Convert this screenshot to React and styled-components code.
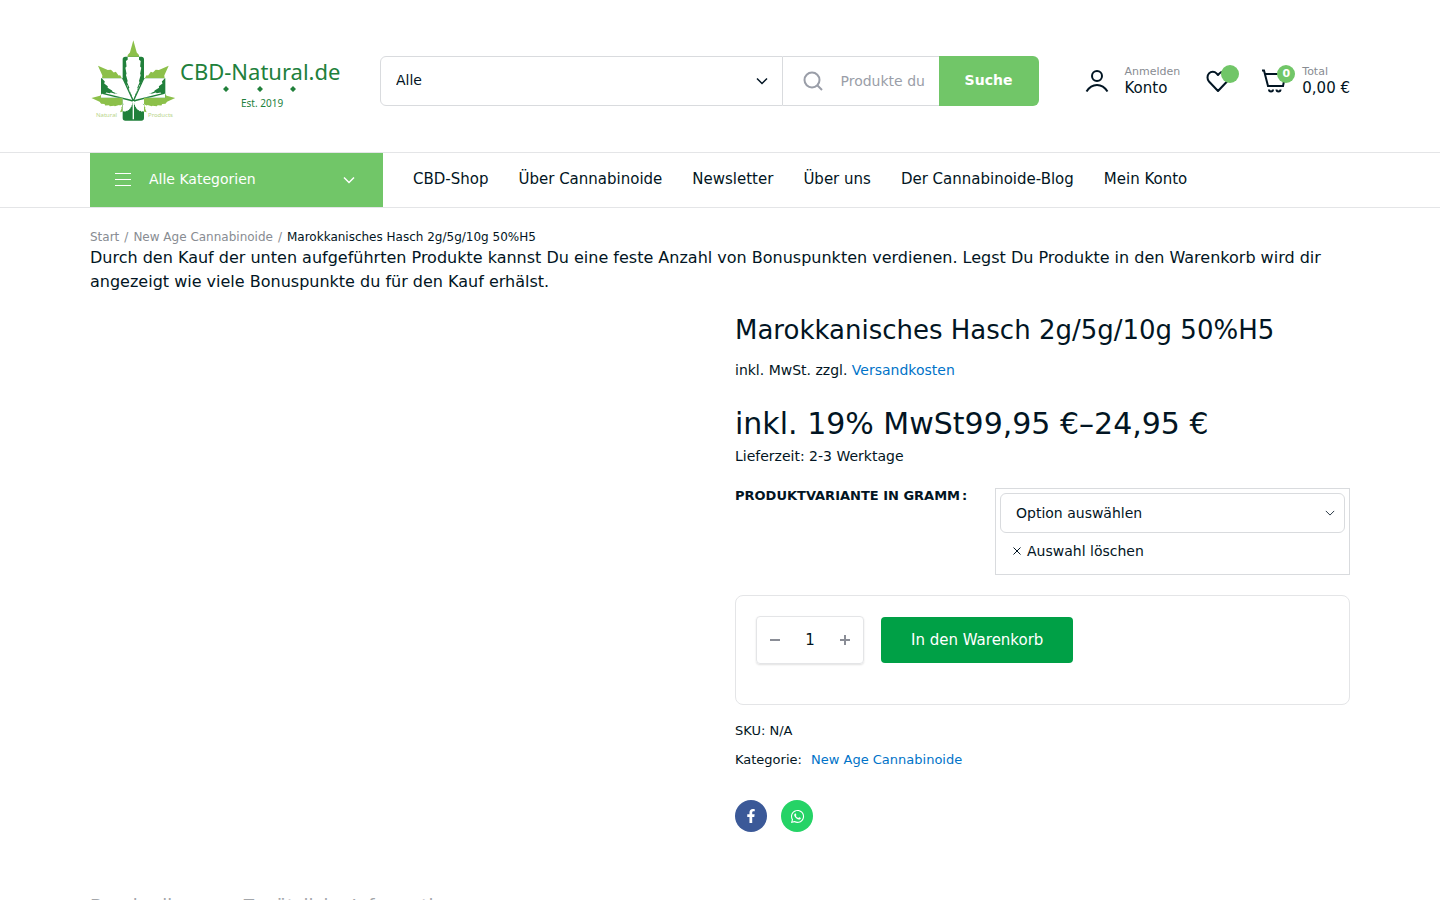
import React from "react";
import styled, { createGlobalStyle } from "styled-components";
import { FaFacebookF, FaWhatsapp } from "react-icons/fa";

const col_ink = "#021523";
const col_green = "#71c668";
const col_line = "#e4e5e7";
const col_field = "#d9dbde";
const col_link = "#0073c8";
const col_muted = "#888c92";

const navLinks = [
  "CBD-Shop",
  "Über Cannabinoide",
  "Newsletter",
  "Über uns",
  "Der Cannabinoide-Blog",
  "Mein Konto",
];

const leafPath =
  "M0 0L-4-12L-8-20L-7-22L-11-31L-10-33L-13-43L-12-45L-14-55L-12-57L-13-66L-10-68L-10-76L-6-80L0-100L6-80L10-76L10-68L13-66L12-57L14-55L12-45L13-43L10-33L11-31L7-22L8-20L4-12Z";

// rotation and length of every leaf, seen from the middle of the plant
const leaves = [
  "scale(1.7 1.82)",
  "rotate(-45) scale(1.9 1.5)",
  "rotate(45) scale(1.9 1.5)",
  "rotate(-86) scale(1.5 1.26)",
  "rotate(86) scale(1.5 1.26)",
  "rotate(-130) scale(.9 .52)",
  "rotate(130) scale(.9 .52)",
];

const Leaves = ({ fill }) => (
  <g transform="translate(142 195)" fill={fill}>
    {leaves.map((transform) => (
      <path key={transform} d={leafPath} transform={transform} />
    ))}
  </g>
);

const crossPath =
  "M118 62H166Q174 62 174 70V127H238V185H174V246Q174 254 166 254H118Q110 254 110 246V185H45V127H110V70Q110 62 118 62Z";

const Logo = () => (
  <svg width="250" height="86" viewBox="0 0 250 86" role="img" aria-label="CBD-Natural.de">
    <clipPath id="cross">
      <path d={crossPath} />
    </clipPath>
    <g transform="translate(-4 -2) scale(.3333)">
      <Leaves fill="#8cc04a" />
      <path d={crossPath} fill="#21803b" />
      <g clipPath="url(#cross)">
        <Leaves fill="#fff" />
        <path
          d="M142 195L112 130M142 195L172 130M142 195L50 172M142 195L234 172"
          stroke="#21803b"
          strokeWidth="4"
        />
        <path d="M142 195V250" stroke="#fff" strokeWidth="4" />
      </g>
    </g>
    <LogoText x="90" y="42" $size={22}>CBD-Natural.de</LogoText>
    <path d="M136 48l3 3-3 3-3-3zM170 48l3 3-3 3-3-3zM203 48l3 3-3 3-3-3z" fill="#21803b" />
    <LogoText x="151" y="69" $size={10}>Est. 2019</LogoText>
    <LogoText x="6" y="79" $size={6} $light>Natural</LogoText>
    <LogoText x="58" y="79" $size={6} $light>Products</LogoText>
  </svg>
);

const UserIcon = () => (
  <svg width="24" height="24" viewBox="0 0 24 24" fill="none" stroke="currentColor" strokeWidth="2">
    <circle cx="12" cy="7" r="5" />
    <path d="M1.500 22.500C4 18.500 7.500 16 12 16s8 2.500 10.500 6.500" />
  </svg>
);

const HeartIcon = () => (
  <svg width="24" height="24" viewBox="0 0 24 24" fill="none" stroke="currentColor" strokeWidth="2" strokeLinejoin="round">
    <path d="M12 22L3 12.500C1 10.200 1 6.600 3 4.400c2.100-2.200 5.500-2.200 7.500 0L12 6l1.500-1.600c2-2.200 5.400-2.200 7.500 0 2 2.200 2 5.800 0 8.100z" />
  </svg>
);

const CartIcon = () => (
  <svg width="24" height="24" viewBox="0 0 24 24" fill="none" stroke="currentColor" strokeWidth="2">
    <path d="M0 1.500h2L6 17h15L23.500 5H3" />
    <path d="M7 20.500a2 2 0 0 0 4 0M14.500 20.500a2 2 0 0 0 4 0" />
  </svg>
);

const SearchIcon = () => (
  <svg width="20" height="20" viewBox="0 0 20 20" fill="none" stroke="#9a9ea8" strokeWidth="2">
    <circle cx="9" cy="9" r="7.500" />
    <path d="M14.500 14.500L19 19" />
  </svg>
);

const Chevron = ({ size = 12, width = 1.5 }) => (
  <svg width={size} height={size} viewBox="0 0 12 12" fill="none" stroke="currentColor" strokeWidth={width}>
    <path d="M1 3.500l5 5 5-5" />
  </svg>
);

const MenuIcon = () => (
  <svg width="16" height="14" viewBox="0 0 16 14" stroke="currentColor" strokeWidth="1">
    <path d="M0 .5h16M0 6.500h16M0 12.500h16" />
  </svg>
);

const App = () => {
  return (
    <>
      <GlobalStyle />
      <Header>
        <HeaderInner>
          <LogoLink href="#">
            <Logo />
          </LogoLink>
          <SearchForm onSubmit={(e) => e.preventDefault()}>
            <SearchCategory>
              <CategorySelect aria-label="Kategorie">
                <option>Alle</option>
              </CategorySelect>
              <Chevron />
            </SearchCategory>
            <SearchField>
              <SearchIcon />
              <SearchInput
                type="text"
                aria-label="Produkte durchsuchen"
                placeholder="Produkte durchsuchen"
              />
            </SearchField>
            <SearchButton type="submit">Suche</SearchButton>
          </SearchForm>
          <Actions>
            <Action href="#">
              <UserIcon />
              <ActionText>
                <ActionHint>Anmelden</ActionHint>
                <ActionLabel>Konto</ActionLabel>
              </ActionText>
            </Action>
            <Action href="#" aria-label="Wunschliste" $iconOnly>
              <IconWithBadge>
                <HeartIcon />
                <Badge />
              </IconWithBadge>
            </Action>
            <Action href="#">
              <IconWithBadge>
                <CartIcon />
                <Badge>0</Badge>
              </IconWithBadge>
              <ActionText>
                <ActionHint>Total</ActionHint>
                <ActionLabel>0,00 €</ActionLabel>
              </ActionText>
            </Action>
          </Actions>
        </HeaderInner>
      </Header>

      <NavBar>
        <NavInner>
          <CategoriesButton type="button">
            <MenuIcon />
            <span>Alle Kategorien</span>
            <Chevron />
          </CategoriesButton>
          {navLinks.map((label) => (
            <NavLink href="#" key={label}>
              {label}
            </NavLink>
          ))}
        </NavInner>
      </NavBar>

      <Main>
        <Breadcrumb aria-label="Brotkrumen">
          <a href="#">Start</a>
          <span>/</span>
          <a href="#">New Age Cannabinoide</a>
          <span>/</span>
          <Current>Marokkanisches Hasch 2g/5g/10g 50%H5</Current>
        </Breadcrumb>
        <Notice>
          Durch den Kauf der unten aufgeführten Produkte kannst Du eine feste
          Anzahl von Bonuspunkten verdienen. Legst Du Produkte in den Warenkorb
          wird dir angezeigt wie viele Bonuspunkte du für den Kauf erhälst.
        </Notice>

        <Product>
          <Summary>
            <Title>Marokkanisches Hasch 2g/5g/10g 50%H5</Title>
            <Info>
              inkl. MwSt. zzgl. <TextLink href="#">Versandkosten</TextLink>
            </Info>
            <Price>inkl. 19% MwSt99,95 €–24,95 €</Price>
            <Info>Lieferzeit: 2-3 Werktage</Info>

            <Variation>
              <VariationLabel htmlFor="variante">
                Produktvariante in Gramm<span>:</span>
              </VariationLabel>
              <VariationValue>
                <VariationPicker>
                  <VariationSelect id="variante">
                    <option>Option auswählen</option>
                    <option>2g</option>
                    <option>5g</option>
                    <option>10g</option>
                  </VariationSelect>
                  <Chevron size={10} width={1} />
                </VariationPicker>
                <ResetLink href="#">
                  <svg width="8" height="8" viewBox="0 0 8 8" stroke="currentColor">
                    <path d="M.5.5l7 7M7.500.5l-7 7" />
                  </svg>
                  Auswahl löschen
                </ResetLink>
              </VariationValue>
            </Variation>

            <CartBox>
              <Quantity>
                <QuantityButton type="button" aria-label="Weniger">
                  <svg width="10" height="10" viewBox="0 0 10 10" stroke="currentColor" strokeWidth="2">
                    <path d="M0 5h10" />
                  </svg>
                </QuantityButton>
                <QuantityInput type="text" aria-label="Menge" defaultValue="1" />
                <QuantityButton type="button" aria-label="Mehr">
                  <svg width="10" height="10" viewBox="0 0 10 10" stroke="currentColor" strokeWidth="2">
                    <path d="M0 5h10M5 0v10" />
                  </svg>
                </QuantityButton>
              </Quantity>
              <AddButton type="button">In den Warenkorb</AddButton>
            </CartBox>

            <Meta>SKU: N/A</Meta>
            <Meta>
              Kategorie: <TextLink href="#">New Age Cannabinoide</TextLink>
            </Meta>

            <Share>
              <ShareLink href="#" aria-label="Facebook" $color="#3b5998">
                <FaFacebookF size={14} />
              </ShareLink>
              <ShareLink href="#" aria-label="WhatsApp" $color="#25d366">
                <FaWhatsapp size={15} />
              </ShareLink>
            </Share>
          </Summary>
        </Product>

        <Tabs>
          <Tab href="#">Beschreibung</Tab>
          <Tab href="#">Zusätzliche Informationen</Tab>
        </Tabs>
      </Main>
    </>
  );
};

export default App;

const GlobalStyle = createGlobalStyle`
  * {
    box-sizing: border-box;
  }
  html {
    scrollbar-width: none;
  }
  body {
    margin: 0;
    background: #fff;
    color: ${col_ink};
    font-family: "DejaVu Sans", sans-serif;
    font-size: 16px;
    line-height: 24px;
  }
  a {
    color: inherit;
    text-decoration: none;
  }
  button, input, select {
    font-family: inherit;
    color: inherit;
  }
  svg {
    display: block;
    flex-shrink: 0;
  }
`;

const Container = styled.div`
  max-width: 1290px;
  margin: 0 auto;
  padding: 0 15px;
`;

const Header = styled.header`
  padding: 38px 0 28px;
`;
const HeaderInner = styled(Container)`
  display: flex;
  align-items: center;
`;
const LogoLink = styled.a`
  margin-right: 40px;
`;
const LogoText = styled.text`
  font-family: "Noto Sans", "Open Sans", sans-serif;
  font-size: ${(p) => p.$size}px;
  fill: ${(p) => (p.$light ? "#b9d58c" : "#21803b")};
`;

const SearchForm = styled.form`
  display: flex;
  flex: 1;
  height: 50px;
`;
const SearchCategory = styled.div`
  display: flex;
  flex: 1;
  align-items: center;
  padding-right: 14px;
  border: 1px solid ${col_field};
  border-radius: 6px 0 0 6px;
`;
const CategorySelect = styled.select`
  flex: 1;
  height: 48px;
  margin-right: -12px;
  padding: 0 15px 2px;
  border: 0;
  appearance: none;
  background: transparent;
  font-size: 14px;
`;
const SearchField = styled.div`
  display: flex;
  align-items: center;
  gap: 18px;
  width: 156px;
  padding: 0 14px 0 20px;
  border: 1px solid ${col_field};
  border-width: 1px 0;
`;
const SearchInput = styled.input`
  flex: 1;
  min-width: 0;
  height: 48px;
  padding: 0;
  border: 0;
  outline: 0;
  background: transparent;
  font-size: 14px;

  &::placeholder {
    color: #9a9ea8;
  }
`;
const SearchButton = styled.button`
  width: 100px;
  padding: 0 0 2px;
  border: 0;
  border-radius: 0 6px 6px 0;
  background: ${col_green};
  color: #fff;
  font-size: 14px;
  font-weight: bold;
`;

const Actions = styled.div`
  display: flex;
  align-items: center;
  gap: 26px;
  margin-left: 46px;
`;
const Action = styled.a`
  display: flex;
  align-items: center;
  gap: 16px;
  padding-right: ${(p) => (p.$iconOnly ? "6px" : "0")};
`;
const ActionText = styled.span`
  display: flex;
  flex-direction: column;
  padding-bottom: 2px;
`;
const ActionHint = styled.span`
  color: ${col_muted};
  font-size: 11px;
  line-height: 16px;
`;
const ActionLabel = styled.span`
  font-size: 15px;
  line-height: 16px;
`;
const IconWithBadge = styled.span`
  position: relative;
`;
const Badge = styled.span`
  position: absolute;
  top: -4px;
  right: -9px;
  width: 18px;
  height: 18px;
  border-radius: 50%;
  background: ${col_green};
  color: #fff;
  font-size: 11px;
  font-weight: bold;
  line-height: 18px;
  text-align: center;
`;

const NavBar = styled.nav`
  border: 1px solid ${col_line};
  border-width: 1px 0;
`;
const NavInner = styled(Container)`
  display: flex;
  align-items: center;
  gap: 30px;
`;
const CategoriesButton = styled.button`
  display: flex;
  align-items: center;
  width: 293px;
  height: 54px;
  padding: 0 28px 0 25px;
  border: 0;
  background: ${col_green};
  color: #fff;
  font-size: 14px;

  span {
    flex: 1;
    margin-left: 18px;
    padding-bottom: 2px;
    text-align: left;
  }
`;
const NavLink = styled.a`
  padding-bottom: 2px;
  font-size: 15px;
`;

const Main = styled(Container)`
  padding-top: 20px;
`;
const Breadcrumb = styled.nav`
  display: flex;
  gap: 5px;
  color: ${col_muted};
  font-size: 12px;
  line-height: 18px;
`;
const Current = styled.span`
  color: ${col_ink};
`;
const Notice = styled.p`
  margin: 0;
`;

const Product = styled.section`
  display: grid;
  grid-template-columns: 1fr 1fr;
  gap: 30px;
  margin-top: 20px;
`;
const Summary = styled.div`
  grid-column: 2;
`;
const Title = styled.h1`
  margin: 0 0 12px;
  font-size: 26px;
  font-weight: normal;
  line-height: 32px;
`;
const Info = styled.p`
  margin: 0;
  font-size: 14px;
`;
const TextLink = styled.a`
  color: ${col_link};
`;
const Price = styled.p`
  margin: 24px 0 2px;
  font-size: 30px;
  line-height: 36px;
`;

const Variation = styled.div`
  display: flex;
  justify-content: space-between;
  margin-top: 20px;
`;
const VariationLabel = styled.label`
  font-size: 13px;
  font-weight: bold;
  line-height: 16px;
  text-transform: uppercase;

  span {
    margin-left: 2px;
  }
`;
const VariationValue = styled.div`
  width: 355px;
  padding: 4px 4px 11px;
  border: 1px solid ${col_field};
`;
const VariationPicker = styled.div`
  display: flex;
  align-items: center;
  padding-right: 9px;
  border: 1px solid ${col_field};
  border-radius: 6px;
`;
const VariationSelect = styled.select`
  flex: 1;
  height: 38px;
  margin-right: -10px;
  padding: 0 15px;
  border: 0;
  appearance: none;
  background: transparent;
  font-size: 14px;
`;
const ResetLink = styled.a`
  display: flex;
  align-items: center;
  gap: 6px;
  margin: 6px 0 0 13px;
  font-size: 14px;
`;

const CartBox = styled.div`
  display: flex;
  gap: 17px;
  margin: 20px 0 14px;
  padding: 20px 20px 40px;
  border: 1px solid ${col_line};
  border-radius: 8px;
`;
const Quantity = styled.div`
  display: flex;
  align-items: center;
  width: 108px;
  height: 48px;
  border: 1px solid ${col_line};
  border-radius: 4px;
  box-shadow: 0 1px 2px rgba(0, 0, 0, 0.12);
`;
const QuantityButton = styled.button`
  display: flex;
  align-items: center;
  justify-content: center;
  width: 36px;
  height: 46px;
  padding: 0;
  border: 0;
  background: transparent;
  color: #8a8d96;
`;
const QuantityInput = styled.input`
  flex: 1;
  min-width: 0;
  padding: 0;
  border: 0;
  outline: 0;
  background: transparent;
  font-size: 15px;
  text-align: center;
`;
const AddButton = styled.button`
  align-self: center;
  height: 46px;
  padding: 0 30px;
  border: 0;
  border-radius: 4px;
  background: #00a046;
  color: #fff;
  font-size: 15px;
`;

const Meta = styled.p`
  margin: 0 0 5px;
  font-size: 13px;

  a {
    margin-left: 5px;
  }
`;

const Share = styled.div`
  display: flex;
  gap: 14px;
  margin-top: 28px;
`;
const ShareLink = styled.a`
  display: flex;
  align-items: center;
  justify-content: center;
  width: 32px;
  height: 32px;
  border-radius: 50%;
  background: ${(p) => p.$color};
  color: #fff;
`;

const Tabs = styled.div`
  display: flex;
  gap: 30px;
  margin-top: 62px;
  padding-bottom: 40px;
  color: #a3a6aa;
`;
const Tab = styled.a`
  font-size: 18px;
`;
